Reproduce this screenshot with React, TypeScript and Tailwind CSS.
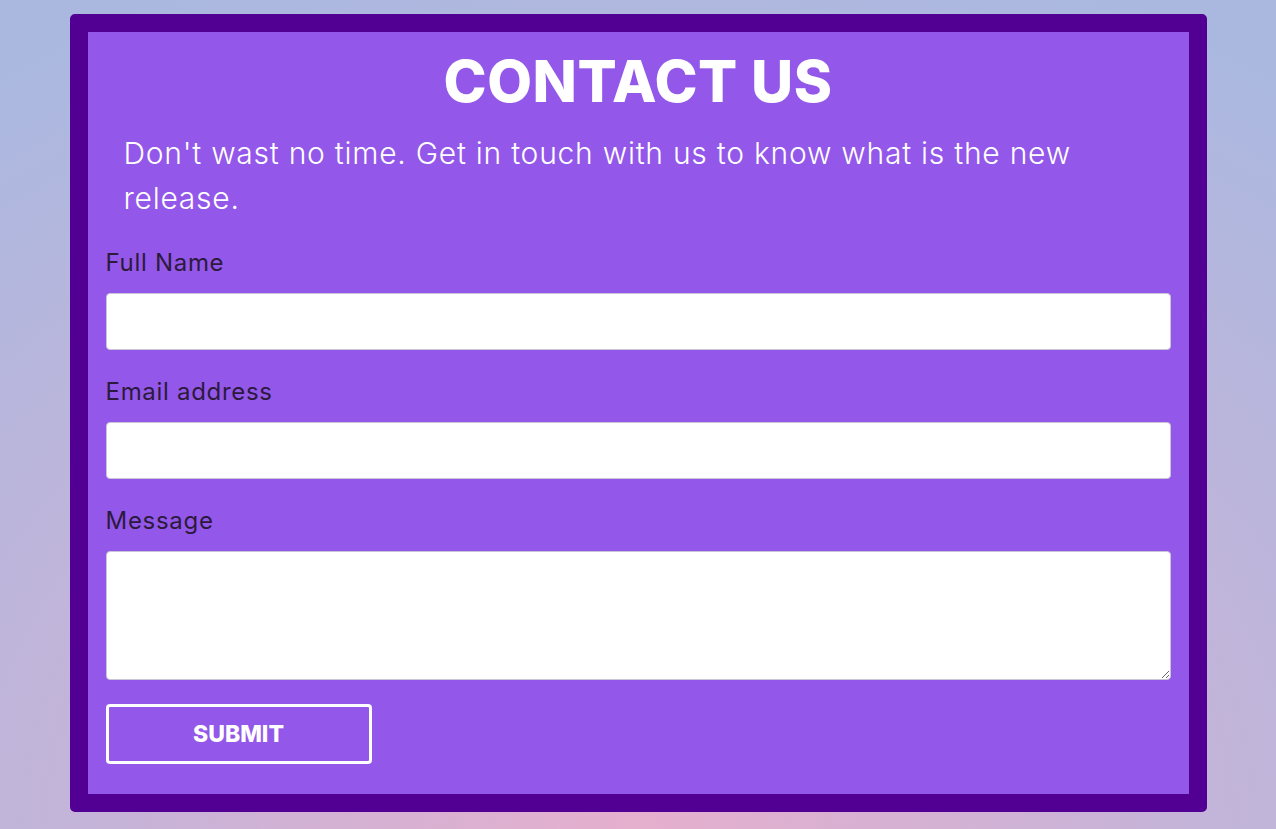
import React, { useState } from "react";

export default function App() {
  const [form, setForm] = useState({ name: "", email: "", message: "" });

  const handleSubmit = (e: React.FormEvent) => {
    e.preventDefault();
  };

  return (
    <div className="min-h-screen w-full bg-[radial-gradient(ellipse_90%_110%_at_50%_100%,#e6afce_0%,#c3b4d9_50%,#aab8e0_100%)] pt-[14px] font-['Inter',sans-serif]">
      <div className="mx-auto w-[1137px] rounded-[5px] border-[18px] border-[#520093] bg-[#9358e9] px-[18px] pt-[13px] pb-[30px]">
        <h1 className="text-center text-[58px] leading-[72px] font-extrabold tracking-[0.5px] text-white">
          CONTACT US
        </h1>
        <p className="mt-[14px] w-[1010px] px-[18px] text-[30px] leading-[45px] font-light tracking-[0.75px] text-white">
          Don't wast no time. Get in touch with us to know what is the new
          release.
        </p>

        <form onSubmit={handleSubmit} className="mt-[25px]">
          <label className="block text-[24px] leading-[33px] tracking-[0.7px] text-[#2c1a3d]">
            Full Name
          </label>
          <input
            type="text"
            value={form.name}
            onChange={(e) => setForm({ ...form, name: e.target.value })}
            className="mt-[14px] block h-[57px] w-full rounded-[4px] border border-[#c9c4d6] bg-white px-3 text-[20px] outline-none"
          />

          <label className="mt-[25px] block text-[24px] leading-[33px] tracking-[0.7px] text-[#2c1a3d]">
            Email address
          </label>
          <input
            type="email"
            value={form.email}
            onChange={(e) => setForm({ ...form, email: e.target.value })}
            className="mt-[14px] block h-[57px] w-full rounded-[4px] border border-[#c9c4d6] bg-white px-3 text-[20px] outline-none"
          />

          <label className="mt-[25px] block text-[24px] leading-[33px] tracking-[0.7px] text-[#2c1a3d]">
            Message
          </label>
          <textarea
            value={form.message}
            onChange={(e) => setForm({ ...form, message: e.target.value })}
            className="mt-[14px] block h-[129px] w-full rounded-[4px] border border-[#c9c4d6] bg-white px-3 py-2 text-[20px] outline-none"
          />

          <button
            type="submit"
            className="mt-[24px] block h-[60px] w-[266px] rounded-[4px] border-[3px] border-white text-[23px] font-extrabold text-white"
          >
            SUBMIT
          </button>
        </form>
      </div>
    </div>
  );
}
